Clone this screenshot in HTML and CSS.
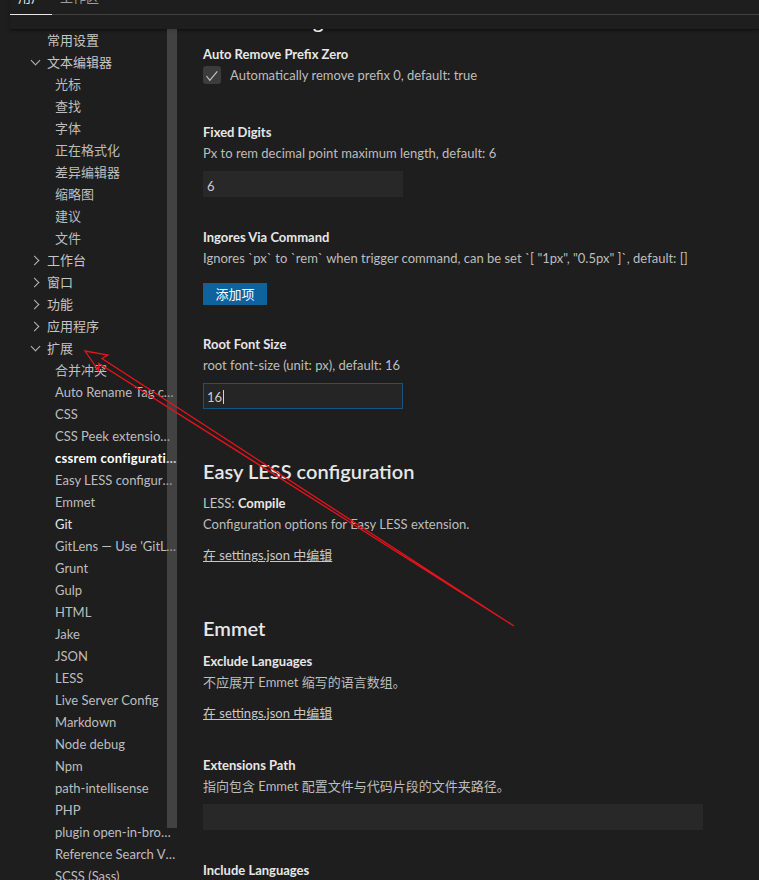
FILE: index.html
```html
<!DOCTYPE html>
<html lang="zh-CN">
<head>
<meta charset="utf-8">
<title>Settings</title>
<link rel="stylesheet" href="styles.css">
</head>
<body>
<div class="app">
  <header class="header">
    <div class="tabs">
      <div class="tab active">用户</div>
      <div class="tab">工作区</div>
    </div>
  </header>
  <div class="main">
    <nav class="toc">
      <div class="row l1">常用设置</div>
      <div class="row cat"><span class="chev down"></span>文本编辑器</div>
      <div class="row l2">光标</div>
      <div class="row l2">查找</div>
      <div class="row l2">字体</div>
      <div class="row l2">正在格式化</div>
      <div class="row l2">差异编辑器</div>
      <div class="row l2">缩略图</div>
      <div class="row l2">建议</div>
      <div class="row l2">文件</div>
      <div class="row cat"><span class="chev right"></span>工作台</div>
      <div class="row cat"><span class="chev right"></span>窗口</div>
      <div class="row cat"><span class="chev right"></span>功能</div>
      <div class="row cat"><span class="chev right"></span>应用程序</div>
      <div class="row cat"><span class="chev down"></span>扩展</div>
      <div class="row l2">合并冲突</div>
      <div class="row l2">Auto Rename Tag configuration</div>
      <div class="row l2">CSS</div>
      <div class="row l2">CSS Peek extension configuration</div>
      <div class="row l2 selected">cssrem configuration</div>
      <div class="row l2">Easy LESS configuration</div>
      <div class="row l2">Emmet</div>
      <div class="row l2 bright">Git</div>
      <div class="row l2">GitLens — Use 'GitLens: Settings'</div>
      <div class="row l2">Grunt</div>
      <div class="row l2">Gulp</div>
      <div class="row l2">HTML</div>
      <div class="row l2">Jake</div>
      <div class="row l2">JSON</div>
      <div class="row l2">LESS</div>
      <div class="row l2">Live Server Config</div>
      <div class="row l2">Markdown</div>
      <div class="row l2">Node debug</div>
      <div class="row l2">Npm</div>
      <div class="row l2">path-intellisense</div>
      <div class="row l2">PHP</div>
      <div class="row l2">plugin open-in-browser</div>
      <div class="row l2">Reference Search View</div>
      <div class="row l2">SCSS (Sass)</div>
    </nav>
    <section class="settings">
      <div class="head-clip">
        <h2 class="group-title in-clip">cssrem configuration</h2>
      </div>

      <div class="setting s-check">
        <div class="s-title">Auto Remove Prefix Zero</div>
        <div class="check-row">
          <span class="checkbox">
            <svg width="18" height="18" viewBox="0 0 18 18"><polyline points="3.5,10 6.8,14.3 14.3,5.3" fill="none" stroke="#c8c8c8" stroke-width="1.1"/></svg>
          </span>
          <span class="s-desc">Automatically remove prefix 0, default: true</span>
        </div>
      </div>

      <div class="setting">
        <div class="s-title">Fixed Digits</div>
        <div class="s-desc">Px to rem decimal point maximum length, default: 6</div>
        <div class="input">6</div>
      </div>

      <div class="setting s-btn">
        <div class="s-title">Ingores Via Command</div>
        <div class="s-desc">Ignores `px` to `rem` when trigger command, can be set `[ "1px", "0.5px" ]`, default: []</div>
        <div class="btn">添加项</div>
      </div>

      <div class="setting">
        <div class="s-title">Root Font Size</div>
        <div class="s-desc">root font-size (unit: px), default: 16</div>
        <div class="input focused">16<span class="caret"></span></div>
      </div>

      <h2 class="group-title">Easy LESS configuration</h2>
      <div class="setting s-link">
        <div class="s-title"><span class="cat-label">LESS: </span>Compile</div>
        <div class="s-desc">Configuration options for Easy LESS extension.</div>
        <div class="link">在 settings.json 中编辑</div>
      </div>

      <h2 class="group-title emmet">Emmet</h2>
      <div class="setting s-link wide-gap">
        <div class="s-title">Exclude Languages</div>
        <div class="s-desc">不应展开 Emmet 缩写的语言数组。</div>
        <div class="link">在 settings.json 中编辑</div>
      </div>

      <div class="setting">
        <div class="s-title">Extensions Path</div>
        <div class="s-desc">指向包含 Emmet 配置文件与代码片段的文件夹路径。</div>
        <div class="input wide"></div>
      </div>

      <div class="setting">
        <div class="s-title">Include Languages</div>
      </div>
    </section>
  </div>
  <div class="scrollbar"></div>
  <svg class="arrow" width="759" height="880" viewBox="0 0 759 880">
    <polygon points="85,351 108,355 102,358.5 514,626 98.8,363.5 98.5,370.5" fill="none" stroke="#e3141c" stroke-width="1.3" stroke-linejoin="miter"/>
  </svg>
</div>
</body>
</html>
```
FILE: styles.css
```css
html, body {
  margin: 0;
  padding: 0;
  background: #1e1e1e;
}
body {
  width: 759px;
  height: 880px;
  overflow: hidden;
  font-family: Lato, "Noto Sans CJK SC", sans-serif;
  font-size: 13px;
  color: #cccccc;
}
.app {
  position: relative;
  width: 759px;
  height: 880px;
  overflow: hidden;
}
.header {
  margin-left: 10px;
  height: 29px;
  box-shadow: 0 1px 0 #121212, 0 2px 3px rgba(0, 0, 0, 0.35);
  overflow: hidden;
}
.tabs {
  display: flex;
  margin-top: -9px;
  border-bottom: 1px solid #3f3f3f;
}
.tab {
  padding: 0 8px 10px;
  font-size: 13px;
  line-height: 13px;
  color: #9d9d9d;
  margin-bottom: -1px;
  border-bottom: 1px solid transparent;
}
.tab.active {
  color: #e7e7e7;
  border-bottom-color: #e7e7e7;
}
.main {
  display: flex;
  align-items: flex-start;
}
.toc {
  width: 177px;
  flex: none;
  height: 851px;
  overflow: hidden;
}
.row {
  height: 22px;
  line-height: 22px;
  white-space: nowrap;
  overflow: hidden;
  text-overflow: ellipsis;
  color: #c5c5c5;
  display: block;
}
.row.l1 { padding-left: 47px; }
.row.l2 { padding-left: 55px; color: #bdbdbd; }
.row.cat { padding-left: 28px; display: flex; align-items: center; }
.row.selected { color: #ffffff; font-weight: 700; letter-spacing: 0.3px; }
.row.bright { color: #e6e6e6; }
.chev {
  width: 16px;
  height: 22px;
  margin-right: 3px;
  position: relative;
  flex: none;
}
.chev::before {
  content: "";
  position: absolute;
  width: 6px;
  height: 6px;
  border-right: 1px solid #b8b8b8;
  border-bottom: 1px solid #b8b8b8;
}
.chev.down::before {
  left: 4px;
  top: 6px;
  transform: rotate(45deg);
}
.chev.right::before {
  left: 3px;
  top: 8px;
  transform: rotate(-45deg);
}
.settings {
  flex: 1;
  padding-left: 26px;
  height: 851px;
  overflow: hidden;
}
.head-clip {
  height: 6px;
  overflow: hidden;
  display: flex;
  flex-direction: column;
  justify-content: flex-end;
  margin-bottom: 10px;
}
.group-title {
  margin: 17px 0 9px;
  font-size: 20px;
  line-height: 28px;
  font-weight: 600;
  color: #e7e7e7;
  white-space: nowrap;
}
.group-title.in-clip {
  margin: 0;
  flex: none;
}
.group-title.emmet {
  margin-bottom: 10px;
}
.setting {
  padding-bottom: 31px;
}
.setting.s-check { padding-bottom: 39px; }
.setting.s-btn { padding-bottom: 30px; }
.setting.s-link { padding-bottom: 33px; }
.setting.s-link.wide-gap { padding-bottom: 34px; }
.s-title {
  font-weight: 700;
  line-height: 18px;
  margin-bottom: 3px;
  color: #e7e7e7;
}
.cat-label {
  font-weight: 400;
  color: #c5c5c5;
}
.s-desc {
  line-height: 18px;
  color: #bdbdbd;
  white-space: nowrap;
}
.check-row {
  display: flex;
  align-items: center;
  margin-top: 2px;
  height: 18px;
}
.checkbox {
  width: 18px;
  height: 18px;
  box-sizing: border-box;
  background: #3c3c3c;
  border-radius: 3px;
  margin-right: 9px;
  display: block;
  flex: none;
}
.checkbox svg { display: block; }
.input {
  margin-top: 9px;
  width: 200px;
  height: 26px;
  box-sizing: border-box;
  background: #282828;
  color: #cccccc;
  padding: 4px 0 0 4px;
  line-height: 22px;
}
.input.focused {
  border: 1px solid #125686;
  background: #252526;
  padding: 3px 0 0 3px;
  line-height: 21px;
}
.caret {
  display: inline-block;
  width: 1px;
  height: 14px;
  background: #d4d4d4;
  margin-left: 1px;
  vertical-align: -2px;
}
.input.wide { width: 500px; }
.btn {
  margin-top: 16px;
  width: 64px;
  height: 22px;
  box-sizing: border-box;
  padding-top: 1px;
  line-height: 21px;
  background: #0e639c;
  color: #ffffff;
  text-align: center;
}
.link {
  margin-top: 13px;
  line-height: 18px;
  color: #c8c8c8;
  text-decoration: underline;
}
.scrollbar {
  position: absolute;
  left: 167px;
  top: 29px;
  width: 10px;
  height: 799px;
  background: rgba(121, 121, 121, 0.4);
}
.arrow {
  position: absolute;
  left: 0;
  top: 0;
  pointer-events: none;
}
```
